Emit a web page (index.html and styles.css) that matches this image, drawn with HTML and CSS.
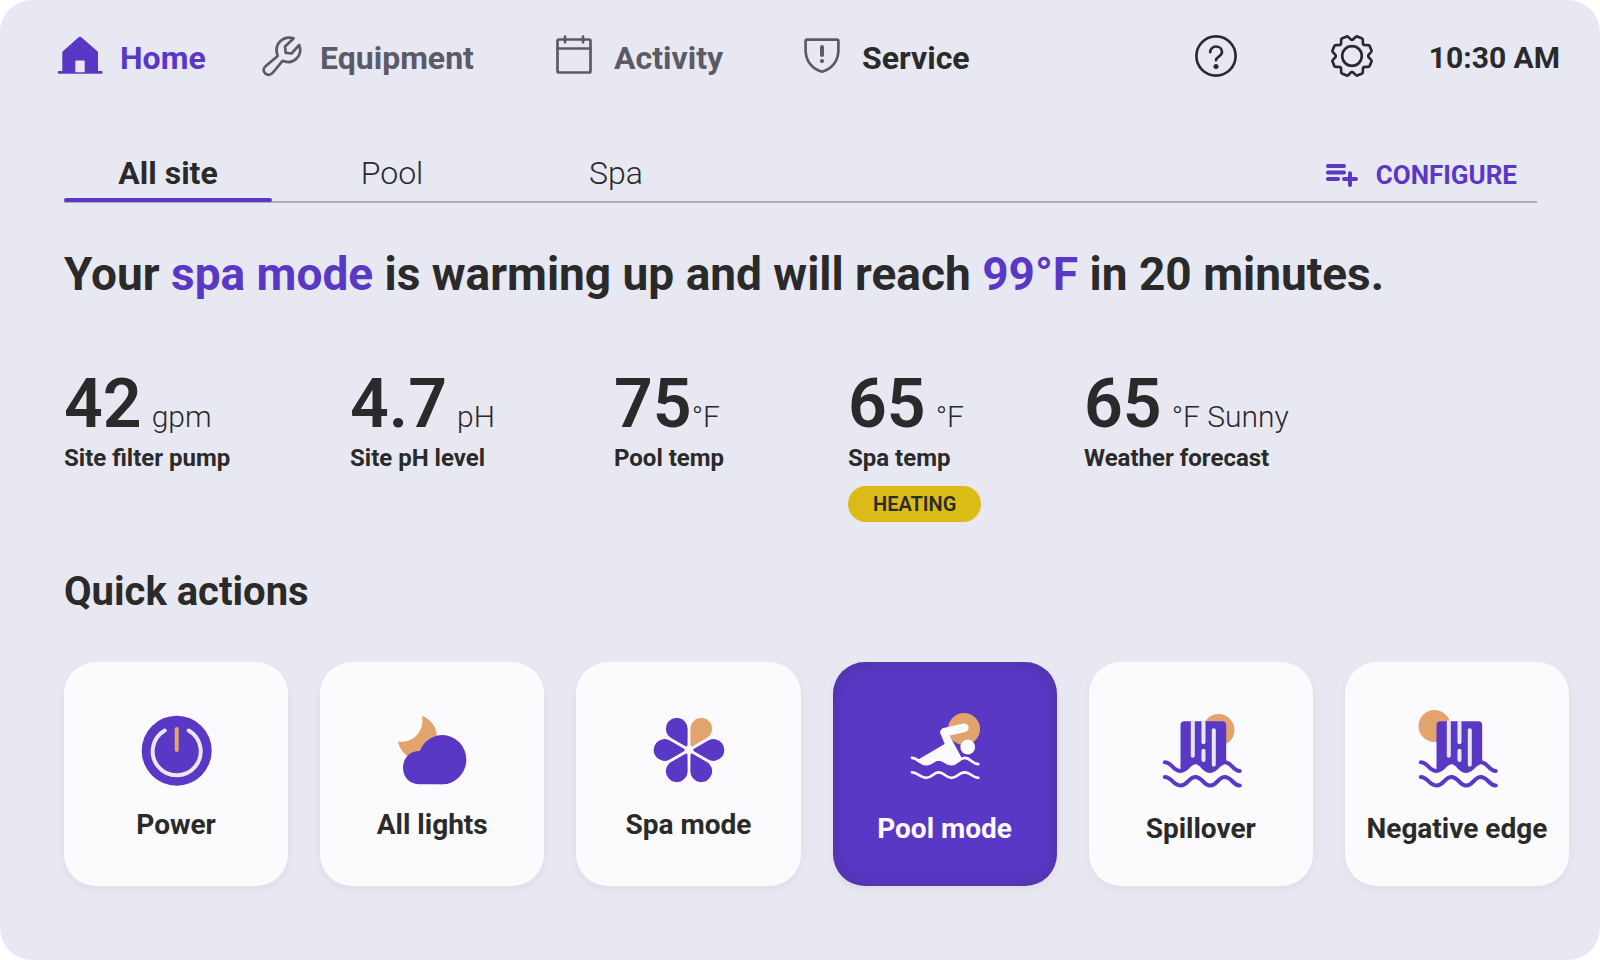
FILE: index.html
```html
<!DOCTYPE html>
<html lang="en">
<head>
    <meta charset="utf-8">
    <title>Pool Control</title>
    <link rel="stylesheet" href="styles.css">
</head>
<body>
<div class="panel">
    <header class="topbar">
        <nav class="main-nav">
            <a href="#home" class="nav-item active">
                <svg class="nav-icon" viewBox="0 0 48 48">
                    <path fill="currentColor" fill-rule="evenodd" d="M22.6 5.3Q24 4.2 25.4 5.3L41.4 19.3Q42 19.9 42 20.6V39H45.4a1.35 1.35 0 0 1 0 2.7H3a1.35 1.35 0 0 1 0-2.7H6.3V20.6Q6.3 19.9 6.9 19.3ZM20.2 28.4Q19.3 28.4 19.3 29.3V40.3H28.7V29.3Q28.7 28.4 27.8 28.4Z"/>
                </svg>
                <span class="nav-label">Home</span>
            </a>
            <a href="#equipment" class="nav-item">
                <svg class="nav-icon line" viewBox="0 0 48 48">
                    <path d="M37.6 6.4L29 14.5L29.7 20.8L35.5 21.5L43.2 13C45 18 44.5 22.5 41 26C37.5 29.8 32 31 26.5 28.8L17 40.5C14.5 43.5 11.5 43.5 9.3 41.5C7 39.5 7 36.5 9.5 34.3L21.7 24C19.5 18 20.5 13 24 9.5C27.8 5.6 33 4.8 37.6 6.4Z"/>
                </svg>
                <span class="nav-label">Equipment</span>
            </a>
            <a href="#activity" class="nav-item">
                <svg class="nav-icon line" viewBox="0 0 48 48">
                    <rect x="7.5" y="7.5" width="33" height="33" rx="1.5"/>
                    <path d="M7.5 16.5H40.5M15 4.5V10.3M33 4.5V10.3"/>
                </svg>
                <span class="nav-label">Activity</span>
            </a>
            <a href="#service" class="nav-item">
                <svg class="nav-icon line" viewBox="0 0 48 48">
                    <path d="M9 7.6H39Q40.4 7.6 40.4 9V18C40.4 30 33 37.3 24 39.7C15 37.3 7.6 30 7.6 18V9Q7.6 7.6 9 7.6Z"/>
                    <path stroke-width="4" d="M24 15V23"/>
                    <circle cx="24" cy="29" r="2.1" fill="currentColor" stroke="none"/>
                </svg>
                <span class="nav-label dark">Service</span>
            </a>
        </nav>
        <div class="tools">
            <button class="icon-button" aria-label="Help">
                <svg class="nav-icon line" viewBox="0 0 48 48">
                    <circle cx="24" cy="24" r="19.6"/>
                    <path d="M18.2 20.2C18.2 17 20.8 14.5 24 14.5S30 16.8 30 20.1C30 24.6 24 24.4 24 28.2"/>
                    <circle cx="24" cy="34.6" r="2.5" fill="currentColor" stroke="none"/>
                </svg>
            </button>
            <button class="icon-button" aria-label="Settings">
                <svg class="nav-icon line" viewBox="0 0 48 48">
                    <defs>
                        <path id="tooth" d="M0 -16.2C2.5 -16.2 3 -20 5.2 -19.6L10.2 -17.5C12 -16.2 9.7 -13.2 11.46 -11.46"/>
                    </defs>
                    <g transform="translate(24 24)">
                        <circle r="9.8"/>
                        <use href="#tooth"/>
                        <use href="#tooth" transform="rotate(45)"/>
                        <use href="#tooth" transform="rotate(90)"/>
                        <use href="#tooth" transform="rotate(135)"/>
                        <use href="#tooth" transform="rotate(180)"/>
                        <use href="#tooth" transform="rotate(225)"/>
                        <use href="#tooth" transform="rotate(270)"/>
                        <use href="#tooth" transform="rotate(315)"/>
                    </g>
                </svg>
            </button>
            <span class="clock">10:30 AM</span>
        </div>
    </header>

    <main class="content">
        <div class="tab-bar">
            <nav class="tabs">
                <a href="#all" class="tab selected">All site</a>
                <a href="#pool" class="tab">Pool</a>
                <a href="#spa" class="tab">Spa</a>
            </nav>
            <button class="configure">
                <svg class="configure-icon" viewBox="0 0 32 24">
                    <path d="M2 3H18M2 9.5H18M2 16H12M18 16H30M24 10.3V22"/>
                </svg>
                CONFIGURE
            </button>
        </div>

        <h1 class="status">Your <em>spa mode</em> is warming up and will reach <em>99°F</em> in 20 minutes.</h1>

        <section class="stats">
            <div class="stat">
                <div class="reading"><span class="value">42</span><span class="unit">gpm</span></div>
                <div class="stat-label">Site filter pump</div>
            </div>
            <div class="stat">
                <div class="reading"><span class="value">4.7</span><span class="unit">pH</span></div>
                <div class="stat-label">Site pH level</div>
            </div>
            <div class="stat">
                <div class="reading tight"><span class="value">75</span><span class="unit">°F</span></div>
                <div class="stat-label">Pool temp</div>
            </div>
            <div class="stat">
                <div class="reading"><span class="value">65</span><span class="unit">°F</span></div>
                <div class="stat-label">Spa temp</div>
                <span class="badge">HEATING</span>
            </div>
            <div class="stat">
                <div class="reading"><span class="value">65</span><span class="unit">°F Sunny</span></div>
                <div class="stat-label">Weather forecast</div>
            </div>
        </section>

        <h2 class="section-title">Quick actions</h2>

        <section class="actions">
            <button class="card">
                <svg class="card-icon" viewBox="0 0 96 80">
                    <circle class="main" cx="48.7" cy="40.7" r="35"/>
                    <path class="ring" d="M36.7 20.5A24 24 0 1 0 60.7 20.5"/>
                    <path class="hand" d="M48.7 19V40"/>
                </svg>
                Power
            </button>
            <button class="card">
                <svg class="card-icon" viewBox="0 0 96 80">
                    <path class="accent" d="M38 6C47 9 53 17 53 28L40 52L23.5 46.2C18.5 42 15.5 38 14 31.7C29 33.5 41 21 38 6Z"/>
                    <ellipse class="main" cx="58.3" cy="49.7" rx="24" ry="24.6"/>
                    <path class="main" d="M58.3 74.3H35.5C26 74.3 19 67.4 19 57.7S26 41 35 41H58.3Z"/>
                </svg>
                All lights
            </button>
            <button class="card">
                <svg class="card-icon" viewBox="0 0 96 80">
                    <defs>
                        <path id="petal" d="M5 -1.2L18.8 -9.3A10.9 10.9 0 1 1 18.8 9.3L5 1.2Q3.4 0 5 -1.2Z"/>
                    </defs>
                    <g class="main" transform="translate(49 40)">
                        <use href="#petal"/>
                        <use href="#petal" transform="rotate(60)"/>
                        <use href="#petal" transform="rotate(120)"/>
                        <use href="#petal" transform="rotate(180)"/>
                        <use href="#petal" transform="rotate(240)"/>
                        <use href="#petal" class="accent" transform="rotate(300)"/>
                    </g>
                </svg>
                Spa mode
            </button>
            <button class="card on">
                <svg class="card-icon tall" viewBox="0 0 96 84">
                    <circle class="accent" cx="67" cy="19" r="16"/>
                    <circle class="main" cx="70.7" cy="37" r="7.4"/>
                    <path class="limb" d="M67.4 17.8L47.6 22.2"/>
                    <path class="main" d="M43.6 23.8C42.8 20 45 18 48 18L53.4 27L64.5 47.5C62 49.5 60 55.3 54.7 55.3C48 55.3 47 50.5 41.7 50.5S36 55.3 29 55.3C25 55.3 23.5 52.5 20.5 50L47.7 34Z"/>
                    <path class="wave" d="M15 47.8C21 47.8 22.5 54.1 29 54.1S36 49.5 41.7 49.5S48.5 54.1 54.7 54.1S61.5 47.8 67.7 47.8S75 54.1 81.3 54.1"/>
                    <path class="wave" d="M15 62.3C21 62.3 22.5 67.8 29 67.8S36 62.3 41.7 62.3S48.5 67.8 54.7 67.8S61.5 62.3 67.7 62.3S75 67.8 81.3 67.8"/>
                </svg>
                Pool mode
            </button>
            <button class="card">
                <svg class="card-icon tall" viewBox="0 0 96 84">
                    <defs>
                        <g id="waterfall">
                            <path class="main" d="M27.5 61V15.3Q27.5 11.3 31.5 11.3H69.2Q73.2 11.3 73.2 15.3V53L57.2 62C50 62 49 53 42.5 53S35 62 27.5 61Z"/>
                            <path class="ring" d="M39.8 12V45.7M50.5 12V32.3M50.5 40.7V50M60.8 20.3V54.7"/>
                            <path class="wave" d="M11.8 52.3C19 52.3 20 61 27.5 61S35.5 52.3 42.5 52.3S50 61 57.2 61S65 52.3 71.8 52.3S80 61 86.8 61"/>
                            <path class="wave" d="M11.8 67C19 67 20 75.5 27.5 75.5S35.5 67 42.5 67S50 75.5 57.2 75.5S65 67 71.8 67S80 75.5 86.8 75.5"/>
                        </g>
                    </defs>
                    <circle class="accent" cx="65.5" cy="20" r="16"/>
                    <use href="#waterfall"/>
                </svg>
                Spillover
            </button>
            <button class="card">
                <svg class="card-icon tall" viewBox="0 0 96 84">
                    <circle class="accent" cx="25.5" cy="16" r="16"/>
                    <use href="#waterfall"/>
                </svg>
                Negative edge
            </button>
        </section>
    </main>
</div>
</body>
</html>
```
FILE: styles.css
```css
* {
    box-sizing: border-box;
}
body {
    margin: 0;
    background-color: white;
    font-family: Roboto, sans-serif;
    color: #2a2a2a;
}
a {
    color: inherit;
    text-decoration: none;
}
button {
    border: none;
    background: none;
    padding: 0;
    font-family: inherit;
    color: inherit;
    cursor: pointer;
}
svg {
    display: block;
    flex-shrink: 0;
}
.panel {
    min-height: 100vh;
    padding: 32px 0 74px;
    border-radius: 32px;
    background-color: #e8e8f2;
    overflow: hidden;
}

/* top bar */
.topbar {
    display: flex;
    justify-content: space-between;
    padding: 0 40px 0 56px;
}
.main-nav {
    display: grid;
    grid-template-columns: 200px 294px 248px auto;
}
.nav-item {
    display: flex;
    align-items: center;
    gap: 16px;
    color: #5b5a66;
}
.nav-item.active {
    color: #5a38c6;
}
.nav-icon {
    width: 48px;
    height: 48px;
}
.line {
    fill: none;
    stroke: currentColor;
    stroke-width: 2.7;
    stroke-linecap: round;
    stroke-linejoin: round;
}
.nav-label,
.clock {
    padding-top: 4px;
    font-size: 32px;
    font-weight: bold;
    line-height: 40px;
}
.nav-label.dark {
    color: #2a2a2a;
}
.clock {
    font-size: 30px;
}
.tools {
    display: flex;
    align-items: center;
}
.icon-button {
    margin-right: 88px;
}
.icon-button + .icon-button {
    margin-right: 53px;
}

/* tabs */
.content {
    padding: 64px 31px 0 64px;
}
.tab-bar {
    display: flex;
    justify-content: space-between;
    height: 59px;
    margin-right: 32px;
    border-bottom: 2px solid #adadb8;
}
.tabs {
    display: grid;
    grid-template-columns: 208px 240px 208px;
    margin-bottom: -1px;
}
.tab {
    padding-top: 9px;
    border-bottom: 4px solid transparent;
    font-size: 32px;
    font-weight: 300;
    line-height: 40px;
    text-align: center;
}
.tab.selected {
    position: relative;
    border: none;
    font-weight: bold;
}
.tab.selected::after {
    content: "";
    position: absolute;
    left: 0;
    right: 0;
    bottom: 0;
    height: 4px;
    border-radius: 2px;
    background-color: #5a38c6;
}
.configure {
    display: flex;
    align-items: center;
    gap: 18px;
    margin-right: 20px;
    padding-top: 4px;
    color: #5a38c6;
    font-size: 26px;
    font-weight: bold;
}
.configure-icon {
    width: 32px;
    height: 24px;
    fill: none;
    stroke: currentColor;
    stroke-width: 4;
    stroke-linecap: round;
}

/* status line */
.status {
    margin: 43px 0 0;
    font-size: 46px;
    line-height: 56px;
}
.status em {
    color: #5a38c6;
    font-style: normal;
}

/* readings */
.stats {
    display: grid;
    grid-template-columns: 286px 264px 234px 236px auto;
    margin-top: 65px;
}
.reading {
    display: flex;
    align-items: baseline;
    gap: 10px;
    height: 74px;
}
.reading.tight {
    gap: 0;
}
.value {
    font-size: 68px;
    font-weight: 600;
    line-height: 74px;
}
.unit {
    font-size: 30px;
    font-weight: 300;
    line-height: 40px;
}
.stat-label {
    margin-top: 3px;
    font-size: 24px;
    font-weight: bold;
    line-height: 28px;
}
.badge {
    display: inline-block;
    margin-top: 14px;
    padding: 0 25px;
    border-radius: 18px;
    background-color: #dbbb17;
    font-size: 20px;
    font-weight: 600;
    line-height: 36px;
    vertical-align: top;
}

/* quick actions */
.section-title {
    margin: 46px 0;
    font-size: 40px;
    line-height: 48px;
}
.actions {
    display: grid;
    grid-template-columns: repeat(6, 1fr);
    gap: 32px;
}
.card {
    display: flex;
    flex-direction: column;
    align-items: center;
    gap: 19px;
    height: 224px;
    padding-top: 48px;
    border-radius: 32px;
    background-color: #fbfbfe;
    box-shadow: 0 4px 8px rgba(60, 50, 110, 0.06);
    font-size: 28px;
    font-weight: bold;
    line-height: 32px;
    white-space: nowrap;
}
.card.on {
    background-color: #5a38c6;
    box-shadow: inset 0 0 16px rgba(42, 42, 42, 0.3), 0 4px 8px rgba(60, 50, 110, 0.06);
    color: #fbfbfe;
}
.card-icon {
    width: 96px;
    height: 80px;
}
.card-icon.tall {
    height: 84px;
}
.main {
    fill: #5a38c6;
}
.accent {
    fill: #e2a36d;
}
.ring,
.hand,
.wave,
.limb {
    fill: none;
    stroke: #e8e8f2;
    stroke-width: 4;
    stroke-linecap: round;
    stroke-linejoin: round;
}
.hand {
    stroke: #e2a36d;
}
.wave {
    stroke: #5a38c6;
}
.on .main {
    fill: #fbfbfe;
}
.on .wave {
    stroke: #fbfbfe;
    stroke-width: 2.7;
}
.on .limb {
    stroke: #fbfbfe;
    stroke-width: 8.6;
}
```
